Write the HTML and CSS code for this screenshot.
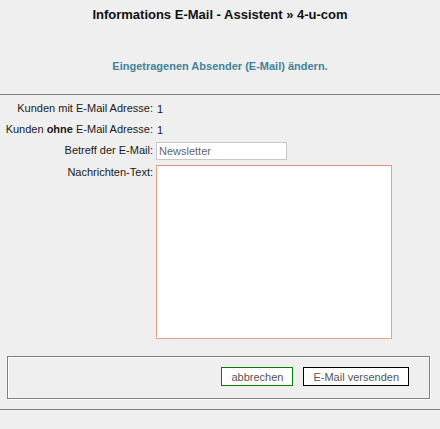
FILE: index.html
```html
<!DOCTYPE html>
<html lang="de">
<head>
    <meta charset="UTF-8">
    <meta name="viewport" content="width=device-width, initial-scale=1.0">
    <title>Informations E-Mail - Assistent</title>
    <link rel="stylesheet" href="styles.css">
</head>
<body>
    <h1 class="title">Informations E-Mail - Assistent &raquo; 4-u-com</h1>
    <a href="#" class="sender-link">Eingetragenen Absender (E-Mail) ändern.</a>
    <hr class="rule rule-top">
    <form class="mail-form">
        <div class="row">
            <span class="label">Kunden mit E-Mail Adresse:</span>
            <span class="value">1</span>
        </div>
        <div class="row">
            <span class="label">Kunden <b>ohne</b> E-Mail Adresse:</span>
            <span class="value">1</span>
        </div>
        <div class="row">
            <label class="label" for="subject">Betreff der E-Mail:</label>
            <input type="text" id="subject" class="subject" value="Newsletter">
        </div>
        <div class="row row-text">
            <label class="label" for="body">Nachrichten-Text:</label>
            <textarea id="body" class="message" autofocus></textarea>
        </div>
        <div class="actions">
            <button type="button" class="btn btn-cancel">abbrechen</button>
            <button type="submit" class="btn btn-send">E-Mail versenden</button>
        </div>
    </form>
    <hr class="rule">
</body>
</html>
```

FILE: styles.css
```css
body {
    margin: 0;
    background: #efefef;
    font-family: "Liberation Sans", Arial, sans-serif;
    font-size: 11px;
    color: #1a1a1a;
}
.title {
    margin: 0;
    padding-top: 7px;
    font-size: 13px;
    line-height: 15px;
    text-align: center;
    color: #111;
}
.sender-link {
    display: block;
    margin-top: 38px;
    line-height: 13px;
    text-align: center;
    font-weight: bold;
    color: #3f8499;
    text-decoration: none;
}
.rule {
    margin: 0;
    border: 0;
    border-top: 1px solid #808080;
    height: 0;
}
.rule-top {
    margin-top: 21px;
}
.mail-form {
    padding-top: 3px;
}
.row {
    display: flex;
    align-items: center;
    height: 21px;
}
.label {
    width: 153px;
    margin-right: 3px;
    text-align: right;
    line-height: 13px;
}
.value {
    padding-left: 1px;
}
.subject {
    box-sizing: border-box;
    width: 131px;
    height: 18px;
    margin: 0;
    padding: 0 2px;
    border: 1px solid #c8c8c8;
    background: #fff;
    font-family: inherit;
    font-size: 11px;
    color: #666;
}
.row-text {
    align-items: flex-start;
    height: auto;
    padding-top: 4px;
}
.row-text .label {
    padding-top: 1px;
}
.message {
    box-sizing: border-box;
    width: 236px;
    height: 174px;
    margin: 0;
    padding: 3px;
    border: 1px solid #eaa27f;
    border-top-color: #e0937a;
    background: #fff;
    resize: none;
    outline: none;
    font-family: inherit;
    font-size: 11px;
}
.actions {
    display: flex;
    justify-content: flex-end;
    gap: 10px;
    margin: 17px 10px 10px 7px;
    padding: 10px 20px 12px;
    border: 1px solid #808080;
    box-shadow: inset 1px 1px 0 #fff, 1px 1px 0 #fff;
}
.btn {
    height: 19px;
    padding: 0 9px;
    background: #fff;
    font-family: inherit;
    font-size: 11px;
    color: #555;
    cursor: pointer;
}
.btn-cancel {
    border: 1px solid #008000;
}
.btn-send {
    border: 1px solid #000;
}
```
